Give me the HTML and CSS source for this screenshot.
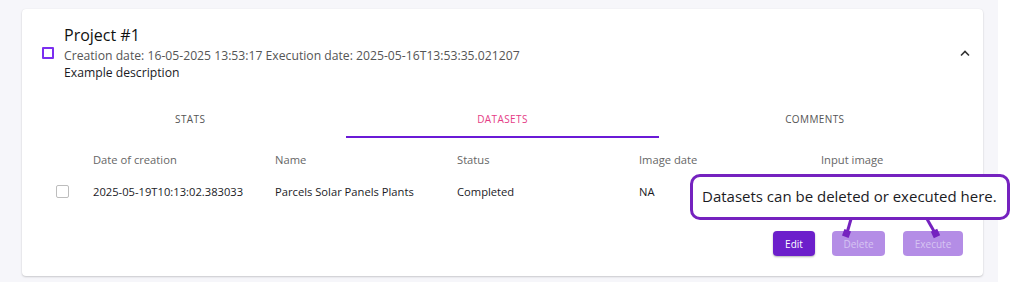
FILE: index.html
```html
<!DOCTYPE html>
<html>
<head>
<meta charset="utf-8">
<link rel="stylesheet" href="styles.css">
</head>
<body>
<div class="page">
  <div class="card">
    <div class="head">
      <span class="check check-purple"></span>
      <div class="info">
        <div class="title">Project #1</div>
        <div class="dates">Creation date: 16-05-2025 13:53:17 Execution date: 2025-05-16T13:53:35.021207</div>
        <div class="desc">Example description</div>
      </div>
      <svg class="chev" width="12" height="8" viewBox="0 0 12 8"><path d="M2 6.5 L6 2.5 L10 6.5" fill="none" stroke="#333" stroke-width="1.6"/></svg>
    </div>
    <div class="tabs">
      <div class="tab">STATS</div>
      <div class="tab active">DATASETS</div>
      <div class="tab">COMMENTS</div>
    </div>
    <div class="table">
      <div class="row header">
        <div class="cell-check"></div>
        <div class="cell">Date of creation</div>
        <div class="cell">Name</div>
        <div class="cell">Status</div>
        <div class="cell">Image date</div>
        <div class="cell last">Input image</div>
      </div>
      <div class="row body">
        <div class="cell-check"><span class="check check-grey"></span></div>
        <div class="cell">2025-05-19T10:13:02.383033</div>
        <div class="cell">Parcels Solar Panels Plants</div>
        <div class="cell">Completed</div>
        <div class="cell">NA</div>
        <div class="cell last"></div>
      </div>
    </div>
    <div class="actions">
      <button class="btn btn-edit">Edit</button>
      <button class="btn btn-off">Delete</button>
      <button class="btn btn-off btn-exec">Execute</button>
    </div>
  </div>
  <div class="tip">Datasets can be deleted or executed here.</div>
  <svg class="pointers" width="1026" height="282" viewBox="0 0 1026 282">
    <line x1="851" y1="219" x2="847" y2="233" stroke="#7522bf" stroke-width="3"/>
    <rect x="843" y="230" width="7" height="7" fill="#7522bf" transform="rotate(20 846.5 233.5)"/>
    <line x1="927" y1="219" x2="935" y2="233" stroke="#7522bf" stroke-width="3"/>
    <rect x="932" y="230" width="7" height="7" fill="#7522bf" transform="rotate(-25 935.5 233.5)"/>
  </svg>
</div>
</body>
</html>
```
FILE: styles.css
```css
* { box-sizing: border-box; }
body {
  margin: 0;
  background: #ffffff;
  font-family: "Open Sans", "DejaVu Sans", sans-serif;
  color: #1b1b1f;
}
.page {
  position: relative;
  width: 998px;
  height: 282px;
  background: #f6f6fa;
  padding: 9px 15px 0 22px;
}
.card {
  background: #fff;
  border-radius: 4px;
  box-shadow: 0 1px 2px rgba(0,0,0,0.18), 0 0 1px rgba(0,0,0,0.08);
  height: 267px;
  padding: 0 20px 0 12px;
  overflow: hidden;
}
.head {
  display: flex;
  align-items: flex-start;
  padding: 16px 0 0 8px;
  height: 93px;
}
.check {
  display: block;
  width: 12px;
  height: 12px;
  border-radius: 1px;
}
.check-purple {
  border: 2px solid #7b2ff0;
  margin-top: 22px;
  margin-right: 10px;
}
.check-grey {
  width: 13px;
  height: 13px;
  border: 1.5px solid #bdbdbd;
  border-radius: 2px;
}
.info { flex: 1; }
.title {
  font-size: 16px;
  line-height: 20px;
  color: #111;
}
.dates {
  margin-top: 2px;
  font-size: 12.2px;
  line-height: 17px;
  color: #555;
}
.desc {
  font-size: 12.2px;
  line-height: 17px;
  color: #1b1b1f;
}
.chev { margin-top: 24px; margin-right: -8px; }
.tabs {
  display: flex;
  margin-right: -8px;
  height: 36px;
}
.tab {
  flex: 1;
  text-align: center;
  font-size: 10px;
  letter-spacing: 0.4px;
  line-height: 34px;
  color: #555;
  border-bottom: 2px solid transparent;
}
.tab.active {
  color: #e53c86;
  border-bottom-color: #6a1ad6;
}
.table { margin-top: 13px; }
.row { display: flex; align-items: center; }
.row.header { height: 16px; font-size: 11.2px; color: #666; }
.row.body { height: 30px; margin-top: 9px; font-size: 11.2px; color: #1b1b1f; }
.cell-check {
  flex: none;
  width: 59px;
  padding-left: 22px;
}
.cell { flex: none; width: 182px; }
.cell.last { flex: 1; }
.actions {
  display: flex;
  justify-content: flex-end;
  gap: 17px;
  margin-top: 25px;
}
.btn {
  font-family: inherit;
  font-size: 10px;
  height: 25px;
  border: none;
  border-radius: 4px;
  padding: 0 12px;
  color: #fff;
}
.btn-edit {
  background: #6c1fcb;
  box-shadow: 0 1px 2px rgba(0,0,0,0.3);
  width: 42px;
  padding: 0;
}
.btn-off {
  background: #b48de6;
  color: #d6c4f2;
  width: 53px;
  padding: 0;
}
.btn-exec { width: 60px; margin-left: 1px; }
.tip {
  position: absolute;
  left: 690px;
  top: 174px;
  width: 320px;
  height: 46px;
  background: #fff;
  border: 3.5px solid #7522bf;
  border-radius: 10px;
  padding-left: 9px;
  font-size: 15px;
  line-height: 39px;
  color: #1b1b1f;
  white-space: nowrap;
}
.pointers {
  position: absolute;
  left: 0;
  top: 0;
  pointer-events: none;
}
```
